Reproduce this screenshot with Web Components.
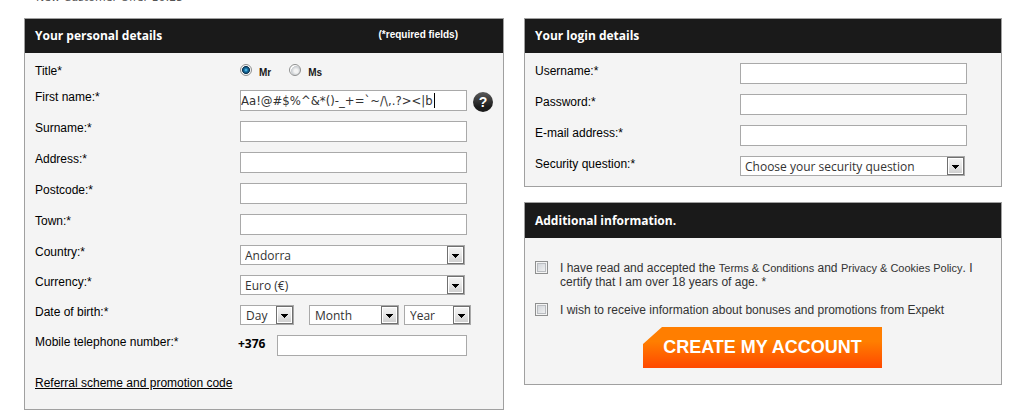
<!DOCTYPE html>
<html lang="en">
<head>
<meta charset="utf-8">
<title>Create an account</title>
<style>
body { margin: 0; background: #fff; color: #000; font: 12px/14px "Liberation Sans", Arial, sans-serif; }
</style>
</head>
<body>
<signup-page></signup-page>
<script>
const define = (name, html, setup) => {
  const tpl = document.createElement('template');
  tpl.innerHTML = html;
  customElements.define(name, class extends HTMLElement {
    constructor() {
      super();
      this.attachShadow({ mode: 'open' }).append(tpl.content.cloneNode(true));
    }
    connectedCallback() { if (setup) setup(this, this.shadowRoot); }
  });
};

/* Bordered box with a black title bar */
define('form-panel', `
<style>
:host { display: block; box-sizing: border-box; border: 1px solid #a0a0a0; background: #f4f4f4; }
header { display: flex; align-items: center; justify-content: space-between; height: var(--bar, 34px); padding: 0 45px 0 10px; background: #1a1a1a; color: #fff; }
h2 { margin: 0; font: bold 12px/16px "Open Sans", sans-serif; }
</style>
<header><h2></h2><slot name="note"></slot></header>
<slot></slot>`, (el, root) => { root.querySelector('h2').textContent = el.getAttribute('heading'); });

/* Label and text box; extra controls go in the slot */
define('text-field', `
<style>
:host { display: grid; grid-template-columns: 205px minmax(0, 1fr); }
label { padding-top: var(--label-top, 0); }
.box { display: flex; gap: 6px; }
.entry { position: relative; flex: 0 0 227px; }
input { box-sizing: border-box; display: block; width: 100%; height: 21px; margin: 0; padding: 0; border: 1px solid #a9a9a9; background: #fff; color: #333; font: 13px/18px "DejaVu Sans Condensed", "Open Sans", sans-serif; outline: 0; }
i { display: none; position: absolute; left: 194px; top: 3px; width: 1px; height: 15px; background: #000; }
:host([active]) i { display: block; }
</style>
<label for="f"></label><div class="box"><div class="entry"><input id="f"><i></i></div><slot></slot></div>`, (el, root) => {
  root.querySelector('label').textContent = el.getAttribute('label');
  const input = root.querySelector('input');
  input.type = el.getAttribute('type') || 'text';
  input.value = el.getAttribute('value') || '';
});

/* Drop-down with a drawn arrow button */
define('drop-down', `
<style>
:host { display: block; position: relative; width: 225px; }
:host([size="day"]) { width: 54px; }
:host([size="month"]) { width: 90px; }
:host([size="year"]) { width: 67px; }
select { appearance: none; box-sizing: border-box; display: block; width: 100%; height: 20px; margin: 0; padding: 1px 18px 0 4px; border: 1px solid #a9a9a9; border-radius: 0; background: #fff; color: #333; font: 12px/18px "Open Sans", sans-serif; }
:host([size]) select { padding-left: 5px; }
svg { position: absolute; right: 1px; top: 1px; pointer-events: none; }
</style>
<select></select>
<svg width="17" height="18" viewBox="0 0 17 18" shape-rendering="crispEdges">
<defs><linearGradient id="g" x2="0" y2="1"><stop stop-color="#f2f2f2"/><stop offset=".5" stop-color="#e6e6e6"/><stop offset="1" stop-color="#cfcfcf"/></linearGradient></defs>
<rect x=".5" y=".5" width="16" height="17" fill="#fff" stroke="#707070"/><rect x="2" y="2" width="13" height="14" fill="url(#g)"/>
<path d="M5 8h7v1h-1v1h-1v1H9v1H8v-1H7v-1H6V9H5z" fill="#000"/></svg>`, (el, root) => {
  const select = root.querySelector('select');
  select.add(new Option(el.getAttribute('value')));
  select.setAttribute('aria-label', el.getAttribute('label'));
});

/* Label beside any group of controls */
define('field-row', `
<style>
:host { display: grid; grid-template-columns: 205px minmax(0, 1fr); }
span { padding-top: var(--label-top, 0); }
.controls { display: flex; }
</style>
<span></span><div class="controls"><slot></slot></div>`, (el, root) => { root.querySelector('span').textContent = el.getAttribute('label'); });

define('title-choice', `
<style>
:host { display: flex; gap: 18px; height: 20px; }
label { display: flex; align-items: flex-start; gap: 7px; font: bold 10px/18px "Liberation Sans", Arial, sans-serif; color: #1a1a1a; }
input { appearance: none; box-sizing: border-box; width: 12px; height: 12px; margin: 0; border: 1px solid #8e8f8f; border-radius: 50%; background: radial-gradient(circle at 60% 60%, #f4f4f4 20%, #c8ccd0 55%, #fff 60%); }
input:checked { background: radial-gradient(circle at 50% 50%, #7fdcf8 0, #1b80b8 20%, #0b3350 52%, #f4f4f4 60%); }
</style>
<label><input type="radio" name="t" checked>Mr</label><label><input type="radio" name="t">Ms</label>`);

define('help-button', `
<style>
:host { display: block; width: 20px; height: 21px; }
button { display: block; width: 20px; height: 20px; margin: 2px 0 0; padding: 0; border: 0; border-radius: 50%; background: linear-gradient(#5a5a5a, #1c1c1c 75%); color: #fff; font: bold 14px/20px "Liberation Sans", Arial, sans-serif; }
</style>
<button type="button" aria-label="Help">?</button>`);

define('date-parts', `
<style>:host { display: flex; } drop-down:nth-of-type(2) { margin: 0 5px 0 15px; }</style>
<drop-down size="day" value="Day" label="Day"></drop-down><drop-down size="month" value="Month" label="Month"></drop-down><drop-down size="year" value="Year" label="Year"></drop-down>`);

define('phone-entry', `
<style>
:host { display: flex; justify-content: space-between; width: 229px; margin-left: -2px; }
b { font: bold 12px/18px "Open Sans", sans-serif; }
input { box-sizing: border-box; width: 190px; height: 21px; margin: 0; border: 1px solid #a9a9a9; background: #fff; font: 13px/18px "DejaVu Sans Condensed", "Open Sans", sans-serif; }
</style>
<b>+376</b><input type="tel" aria-label="Mobile telephone number">`);

define('consent-box', `
<style>
:host { display: block; }
label { display: flex; gap: 12px; color: #333; }
input { appearance: none; flex: none; box-sizing: border-box; width: 13px; height: 13px; margin: 0; border: 1px solid #8e8f8f; background: linear-gradient(135deg, #cbcfd5, #f6f6f6); box-shadow: inset 0 0 0 1px #f4f4f4, inset 0 0 0 2px #b9bcc0; }
</style>
<label><input type="checkbox"><span><slot></slot></span></label>`);

define('submit-button', `
<style>
:host { display: block; width: 239px; }
button { display: block; width: 100%; height: 41px; margin: 0; padding: 0; border: 0; background: linear-gradient(#ff7e00 35%, #ff4800); clip-path: polygon(19px 0, 100% 0, 100% 100%, 0 100%, 0 17px); color: #fff; font: bold 18px/41px "Liberation Sans", Arial, sans-serif; }
</style>
<button type="submit"><slot></slot></button>`);

define('signup-page', `
<style>
:host { display: block; }
.crumb { display: flex; align-items: flex-start; height: 18px; padding-left: 36px; overflow: hidden; color: #555; font: 11px/16px "DejaVu Sans", sans-serif; }
.crumb span { margin-top: -10px; }
main { display: grid; grid-template-columns: 480fr 478fr; gap: 20px; align-items: start; padding: 0 21px 5px 24px; }
.side { display: grid; gap: 15px; }
.side .fields { --label-top: 1px; }
.fields { display: grid; gap: 10px; padding: 10px; }
.personal { padding: 11px 10px 19px; }
title-choice { margin-bottom: -4px; }
.note { padding-bottom: 2px; font: bold 10px/14px "Liberation Sans", Arial, sans-serif; }
a { color: inherit; }
.referral { padding-top: 10px; }
.more { --bar: 35px; }
.extra { display: grid; gap: 14px; padding: 23px 25px 16px 10px; }
.extra a { font-size: 11px; line-height: 12px; text-decoration: none; }
submit-button { margin: -4px 0 0 108px; }
</style>
<div class="crumb"><span>New Customer Offer 10:25</span></div>
<main>
<form-panel heading="Your personal details">
<span slot="note" class="note">(*required fields)</span>
<div class="fields personal">
<field-row label="Title*"><title-choice></title-choice></field-row>
<text-field label="First name:*" active value="Aa!@#$%^&amp;*()-_+=\`~/\\,.?&gt;&lt;|b"><help-button></help-button></text-field>
<text-field label="Surname:*"></text-field>
<text-field label="Address:*"></text-field>
<text-field label="Postcode:*"></text-field>
<text-field label="Town:*"></text-field>
<field-row label="Country:*"><drop-down value="Andorra" label="Country"></drop-down></field-row>
<field-row label="Currency:*"><drop-down value="Euro (€)" label="Currency"></drop-down></field-row>
<field-row label="Date of birth:*"><date-parts></date-parts></field-row>
<field-row label="Mobile telephone number:*"><phone-entry></phone-entry></field-row>
<div class="referral"><a href="#referral">Referral scheme and promotion code</a></div>
</div>
</form-panel>
<div class="side">
<form-panel heading="Your login details">
<div class="fields">
<text-field label="Username:*"></text-field>
<text-field label="Password:*" type="password"></text-field>
<text-field label="E-mail address:*" type="email"></text-field>
<field-row label="Security question:*"><drop-down value="Choose your security question" label="Security question"></drop-down></field-row>
</div>
</form-panel>
<form-panel class="more" heading="Additional information.">
<div class="extra">
<consent-box>I have read and accepted the <a href="#terms">Terms &amp; Conditions</a> and <a href="#privacy">Privacy &amp; Cookies Policy</a>. I certify that I am over 18 years of age. *</consent-box>
<consent-box>I wish to receive information about bonuses and promotions from Expekt</consent-box>
<submit-button>CREATE MY ACCOUNT</submit-button>
</div>
</form-panel>
</div>
</main>`);
</script>
</body>
</html>
